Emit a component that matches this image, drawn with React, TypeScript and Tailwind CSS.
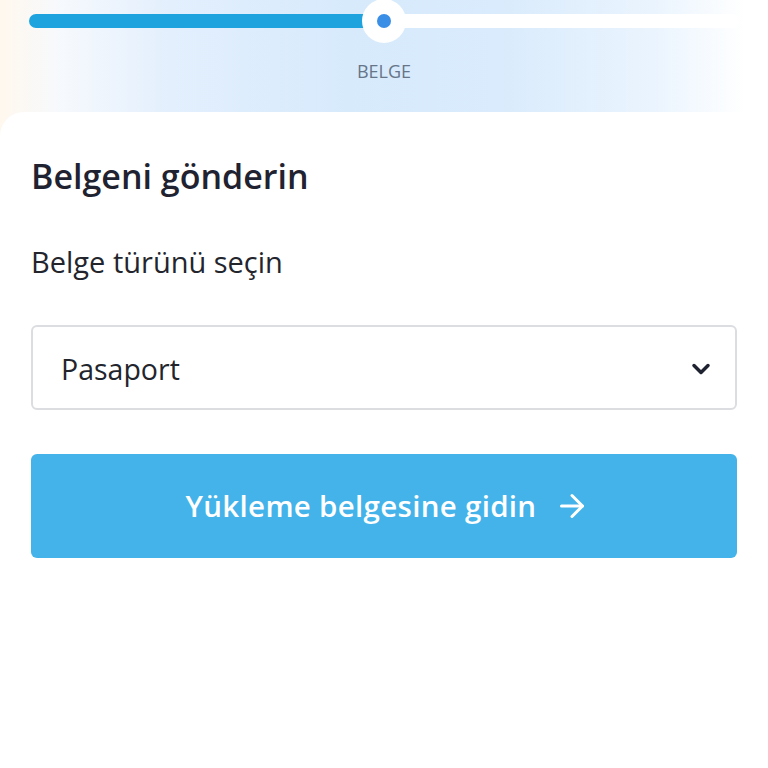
import React from "react";
import { ChevronDown, ArrowRight } from "lucide-react";

export default function App() {
  return (
    <div className="min-h-[768px] w-full bg-white font-['Open_Sans',sans-serif]">
      {/* Progress header */}
      <div className="h-[136px] bg-[linear-gradient(to_right,#fff8ee_0%,#f6f9fd_8%,#e3effd_22%,#d7eafc_45%,#d9ebfc_65%,#eaf4fe_85%,#ffffff_97%)] px-[29px] pt-[14px]">
        <div className="relative h-[14px] rounded-full bg-white">
          <div className="absolute left-0 top-0 h-full w-1/2 rounded-full bg-[#1ea3df]" />
          <div className="absolute left-1/2 top-1/2 flex h-[44px] w-[44px] -translate-x-1/2 -translate-y-1/2 items-center justify-center rounded-full bg-white">
            <div className="h-[14px] w-[14px] rounded-full bg-[#3b8ee6]" />
          </div>
        </div>
        <p className="mt-[30px] text-center text-[18px] leading-[26px] text-[#667588]">BELGE</p>
      </div>

      {/* Card */}
      <div className="-mt-[24px] rounded-t-[24px] bg-white px-[31px] pt-[40px]">
        <h1 className="text-[34px] font-semibold leading-[48px] text-[#1f2230]">Belgeni gönderin</h1>
        <p className="mt-[42px] text-[29px] leading-[40px] text-[#23252d]">Belge türünü seçin</p>

        <button className="mt-[43px] flex h-[85px] w-full items-center justify-between rounded-[6px] border-2 border-[#dcdde1] bg-white pl-[28px] pr-[20px] pt-[3px]">
          <span className="text-[28.5px] text-[#23252d]">Pasaport</span>
          <ChevronDown className="h-[28px] w-[28px] text-[#1f2230]" strokeWidth={3} />
        </button>

        <button className="mt-[44px] flex h-[104px] w-full items-center justify-center gap-[18px] rounded-[6px] bg-[#43b3ea] pl-[8px] text-white">
          <span className="text-[29.5px] font-semibold tracking-[0.3px]">Yükleme belgesine gidin</span>
          <ArrowRight className="h-[36px] w-[36px]" strokeWidth={2} />
        </button>
      </div>
    </div>
  );
}
